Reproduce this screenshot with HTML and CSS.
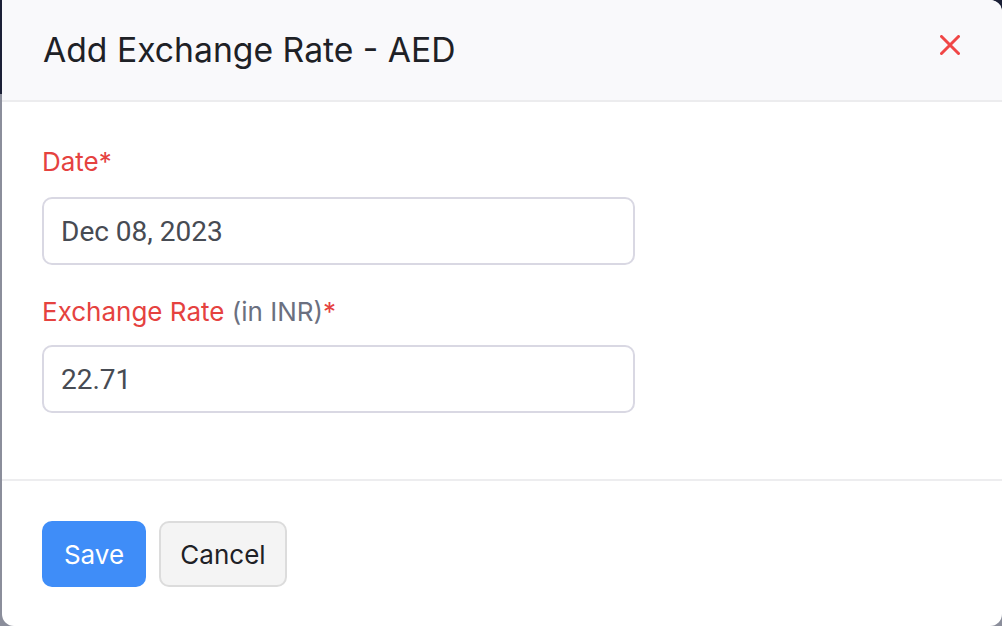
FILE: index.html
```html
<!DOCTYPE html>
<html>
<head>
<meta charset="utf-8">
<link rel="stylesheet" href="styles.css">
</head>
<body>
<div class="backdrop">
  <div class="modal">
    <div class="modal-header">
      <h1 class="title">Add Exchange Rate - AED</h1>
      <button class="close" aria-label="Close">
        <svg width="20" height="20" viewBox="0 0 20 20"><path d="M1.5 1.5 L18.5 18.5 M18.5 1.5 L1.5 18.5" stroke="#f04646" stroke-width="3" stroke-linecap="round" fill="none"/></svg>
      </button>
    </div>
    <div class="modal-body">
      <div class="field">
        <label class="label">Date<span class="req">*</span></label>
        <div class="input">Dec 08, 2023</div>
      </div>
      <div class="field">
        <label class="label">Exchange Rate <span class="muted">(in INR)</span><span class="req">*</span></label>
        <div class="input">22.71</div>
      </div>
    </div>
    <div class="modal-footer">
      <button class="btn btn-primary">Save</button>
      <button class="btn btn-secondary">Cancel</button>
    </div>
  </div>
</div>
</body>
</html>
```
FILE: styles.css
```css
* { box-sizing: border-box; }
html, body { margin: 0; padding: 0; height: 100%; }
body {
  font-family: Inter, "Noto Sans", sans-serif;
  background: linear-gradient(to bottom, #1b2036 0, #1b2036 94px, #8b8e9b 94px);
  overflow: hidden;
}
.backdrop {
  height: 100%;
  padding-left: 2px;
}
.modal {
  height: 100%;
  background: #fff;
  border-radius: 0 12px 12px 12px;
  overflow: hidden;
  display: flex;
  flex-direction: column;
}
.modal-header {
  height: 102px;
  flex: none;
  background: #f9f9fb;
  border-bottom: 2px solid #ececee;
  display: flex;
  align-items: center;
  justify-content: space-between;
  padding: 0 42px 0 41px;
}
.title {
  margin: 0;
  font-size: 33.7px;
  font-weight: 400;
  line-height: 40px;
  color: #1e2126;
}
.close {
  background: none;
  border: 0;
  padding: 0;
  width: 20px;
  height: 20px;
  display: flex;
  margin-bottom: 10px;
}
.modal-body {
  flex: none;
  padding: 42px 40px 0 40px;
  display: flex;
  flex-direction: column;
  gap: 29px;
  height: 379px;
  border-bottom: 2px solid #ededef;
}
.field {
  display: flex;
  flex-direction: column;
  gap: 17px;
}
.field + .field { gap: 15px; }
.label {
  font-size: 26px;
  color: #e5423f;
  line-height: 36px;
}
.muted { color: #6b7080; }
.req { color: #e5423f; }
.input {
  width: 593px;
  height: 68px;
  border: 2px solid #d9d8e3;
  border-radius: 10px;
  padding: 0 17px;
  display: flex;
  align-items: center;
  font-family: Roboto, "Noto Sans", sans-serif;
  font-size: 28px;
  color: #474b53;
}
.modal-footer {
  padding: 40px 40px;
  display: flex;
  gap: 13px;
}
.btn {
  height: 66px;
  border-radius: 10px;
  font-family: Inter, "Noto Sans", sans-serif;
  font-size: 26px;
  padding: 0;
}
.btn-primary {
  background: #3f8df8;
  border: 0;
  color: #fff;
  width: 104px;
}
.btn-secondary {
  background: #f4f4f4;
  border: 2px solid #dcdcdc;
  color: #1e2126;
  width: 128px;
}
```
